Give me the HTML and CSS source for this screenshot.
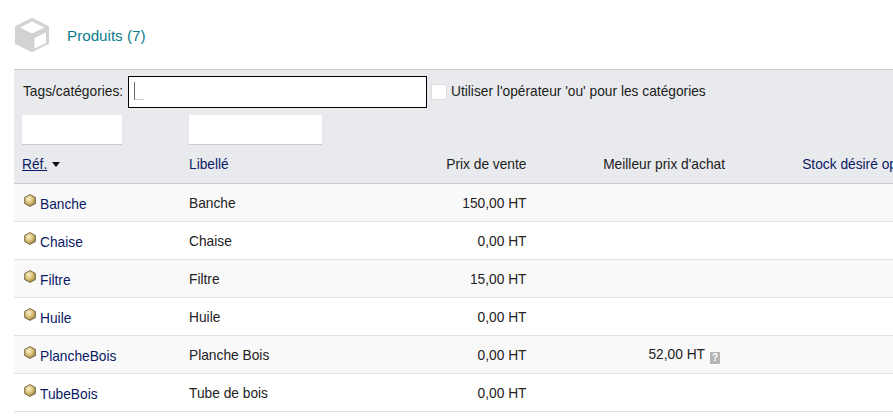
FILE: index.html
```html
<!DOCTYPE html>
<html lang="fr">
<head>
<meta charset="utf-8">
<title>Produits</title>
<link rel="stylesheet" href="styles.css">
</head>
<body>
<header class="title-row">
  <svg class="title-icon" viewBox="0 0 34 34" aria-hidden="true">
    <path fill="#d2d2d2" stroke="#d2d2d2" stroke-width="2" stroke-linejoin="round" d="M17 1 L33 9 V25 L17 33 L1 25 V9 Z"/>
    <path fill="#fff" d="M17 3.5 L29.5 9.5 L17 15.5 L5 9.5 Z"/>
    <path fill="#fff" d="M19.5 20 L31 14.5 V25 L19.5 30.5 Z"/>
  </svg>
  <h1 class="title">Produits (7)</h1>
</header>
<main class="panel">
  <div class="tag-bar">
    <label class="tag-label">Tags/catégories:</label>
    <div class="tag-input"><span class="caret"></span></div>
    <span class="checkbox"></span>
    <span class="check-label">Utiliser l'opérateur 'ou' pour les catégories</span>
  </div>
  <table class="list">
    <colgroup>
      <col class="c1"><col class="c2"><col class="c3"><col class="c4"><col class="c5">
    </colgroup>
    <thead>
      <tr class="filters">
        <td><span class="filter f-ref"></span></td>
        <td><span class="filter f-lib"></span></td>
        <td></td><td></td><td></td>
      </tr>
      <tr class="heads">
        <th><a class="sorted">Réf.</a><span class="sort-arrow"></span></th>
        <th class="link">Libellé</th>
        <th class="num">Prix de vente</th>
        <th class="num">Meilleur prix d'achat</th>
        <th class="num link">Stock désiré optimal</th>
      </tr>
    </thead>
    <tbody>
      <tr>
        <td class="ref"><svg class="cube" viewBox="0 0 12 13"><use href="#cube"/></svg><a>Banche</a></td>
        <td>Banche</td><td class="num">150,00 HT</td><td></td><td></td>
      </tr>
      <tr>
        <td class="ref"><svg class="cube" viewBox="0 0 12 13"><use href="#cube"/></svg><a>Chaise</a></td>
        <td>Chaise</td><td class="num">0,00 HT</td><td></td><td></td>
      </tr>
      <tr>
        <td class="ref"><svg class="cube" viewBox="0 0 12 13"><use href="#cube"/></svg><a>Filtre</a></td>
        <td>Filtre</td><td class="num">15,00 HT</td><td></td><td></td>
      </tr>
      <tr>
        <td class="ref"><svg class="cube" viewBox="0 0 12 13"><use href="#cube"/></svg><a>Huile</a></td>
        <td>Huile</td><td class="num">0,00 HT</td><td></td><td></td>
      </tr>
      <tr>
        <td class="ref"><svg class="cube" viewBox="0 0 12 13"><use href="#cube"/></svg><a>PlancheBois</a></td>
        <td>Planche Bois</td><td class="num">0,00 HT</td>
        <td class="num best">52,00 HT<span class="help">?</span></td><td></td>
      </tr>
      <tr>
        <td class="ref"><svg class="cube" viewBox="0 0 12 13"><use href="#cube"/></svg><a>TubeBois</a></td>
        <td>Tube de bois</td><td class="num">0,00 HT</td><td></td><td></td>
      </tr>
    </tbody>
  </table>
</main>
<svg class="defs" aria-hidden="true">
  <defs>
    <radialGradient id="gold" cx="40%" cy="35%" r="70%">
      <stop offset="0" stop-color="#f9efca"/>
      <stop offset=".5" stop-color="#dcc27a"/>
      <stop offset="1" stop-color="#97803f"/>
    </radialGradient>
  </defs>
  <symbol id="cube" viewBox="0 0 12 13">
    <path fill="url(#gold)" stroke="#6d5f3a" stroke-width=".9" stroke-linejoin="round" d="M6 .6 L11.3 3.4 V9.6 L6 12.4 L.7 9.6 V3.4 Z"/>
  </symbol>
</svg>
</body>
</html>
```
FILE: styles.css
```css
* { box-sizing: border-box; }
html, body { margin: 0; padding: 0; }
body {
  width: 893px;
  height: 416px;
  overflow: hidden;
  background: #fff;
  color: #222;
  font: 13.76px/16px "Liberation Sans", Arial, sans-serif;
}
.title-row {
  display: flex;
  align-items: center;
  height: 69px;
  padding: 1px 0 0 15px;
}
.title-icon { width: 34px; height: 34px; flex: none; }
.title {
  margin: 2px 0 0 18px;
  font-size: 15.2px;
  font-weight: 400;
  color: #0a7d8c;
}
.panel {
  margin-left: 14px;
  width: 879px;
  overflow: hidden;
  border-top: 1px solid #ccc;
}
.tag-bar {
  display: flex;
  align-items: center;
  height: 45px;
  padding: 0 0 1px 9px;
  background: #e9eaed;
}
.tag-label { width: 105px; flex: none; margin-top: -1px; color: #1c1c1c; }
.tag-input {
  width: 299px;
  height: 32px;
  flex: none;
  background: #fff;
  border: 1px solid #000;
  padding: 5px 0 0 5px;
}
.caret {
  display: block;
  width: 10px;
  height: 18px;
  border-left: 1px solid #666;
  border-bottom: 1px solid #ccc;
}
.checkbox {
  width: 16px;
  height: 16px;
  flex: none;
  margin: 0 4px;
  background: #fff;
  border: 1px solid #ddd;
  border-radius: 2px;
}
.check-label { margin-top: -1px; color: #1c1c1c; }
.list {
  width: 920px;
  table-layout: fixed;
  border-collapse: collapse;
}
.c1 { width: 167px; }
.c2 { width: 219px; }
.c3 { width: 134.5px; }
.c4 { width: 198.5px; }
.c5 { width: 201px; }
td, th {
  padding: 3px 8px 0;
  font-weight: 400;
  text-align: left;
  white-space: nowrap;
}
.filters { background: #e9eaed; height: 30px; }
.filters td { vertical-align: top; padding-top: 0; }
.filter {
  display: block;
  height: 30px;
  background: #fff;
  border-bottom: 1px solid #ccc;
}
.f-ref { width: 100px; }
.f-lib { width: 133px; }
.heads { background: #e9eaed; height: 38px; }
.heads th { border-bottom: 1px solid #ccc; padding-top: 3px; }
.sorted { color: #0a1a66; text-decoration: underline; }
.sort-arrow {
  display: inline-block;
  margin-left: 5px;
  vertical-align: 2px;
  border: 4px solid transparent;
  border-top: 5px solid #111;
  border-bottom: 0;
}
.link { color: #0a1a66; }
.num { text-align: right; }
tbody tr { height: 38px; border-bottom: 1px solid #e2e2e2; }
tbody tr:nth-child(odd) { background: #f9f9f9; }
tbody tr:nth-child(even) { background: #fff; }
.ref a { color: #0a1a66; }
.ref { padding-left: 10px; }
.cube { width: 12px; height: 13px; margin-right: 4px; vertical-align: 2px; }
.best { padding-right: 13px; }
.help {
  display: inline-block;
  width: 10px;
  height: 12px;
  margin-left: 5px;
  background: #b5b5b5;
  color: #fff;
  font-size: 10px;
  font-weight: 700;
  line-height: 12px;
  text-align: center;
  vertical-align: -2px;
}
.defs { position: absolute; width: 0; height: 0; }
```
